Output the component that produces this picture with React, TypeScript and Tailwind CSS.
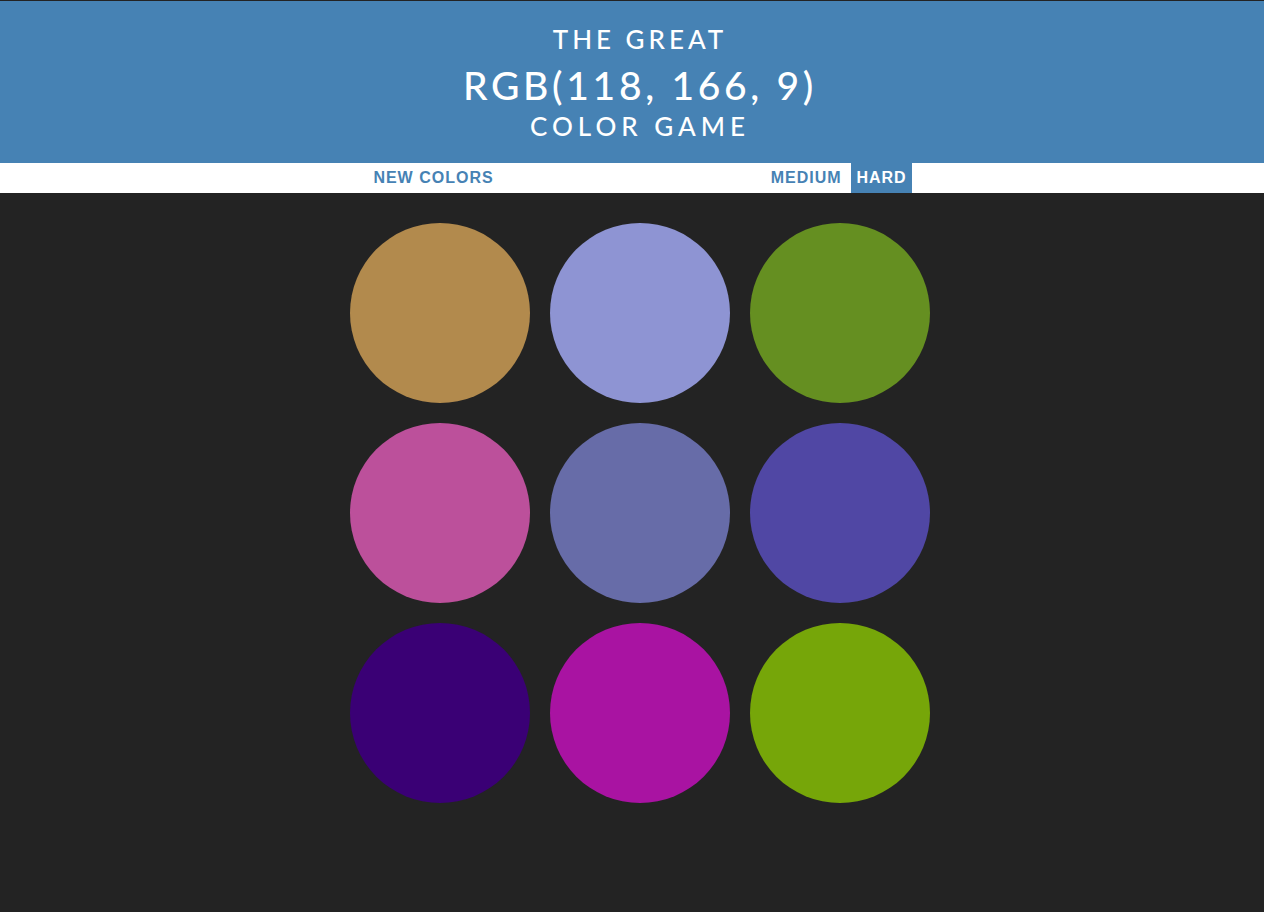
import React from "react";

const colors = [
  "#b28a4d",
  "#8e94d3",
  "#658f21",
  "#bc509b",
  "#676ca8",
  "#5047a4",
  "#3a0075",
  "#a913a2",
  "#76a609",
];

export default function App() {
  return (
    <div className="min-h-[912px] bg-[#232323]">
      <div className="h-px bg-[#232323]" />
      <header
        className="h-[162px] bg-[#4682b4] text-white pl-4 text-center uppercase font-medium"
        style={{ fontFamily: "Lato, 'Open Sans', sans-serif" }}
      >
        <div className="pt-[24px] text-[26px] leading-[28px] tracking-[4px]">The Great</div>
        <div className="mt-[11px] text-[39px] leading-[42px] tracking-[3.7px]">RGB(118, 166, 9)</div>
        <div className="mt-[6px] text-[26px] leading-[28px] tracking-[5px]">Color Game</div>
      </header>
      <nav
        className="h-[30px] bg-white pl-4"
        style={{ fontFamily: "'Liberation Sans', Arial, sans-serif" }}
      >
        <div className="mx-auto flex h-full w-[544px] items-stretch justify-between text-[16px] font-bold">
          <button className="px-[5.4px] uppercase tracking-[1px] text-[#4682b4] leading-[30px]">New Colors</button>
          <div className="flex gap-[4px]">
            <button className="px-[5.4px] uppercase tracking-[1px] text-[#4682b4] leading-[30px]">Medium</button>
            <button className="px-[5.4px] uppercase tracking-[1px] bg-[#4682b4] text-white leading-[30px]">Hard</button>
          </div>
        </div>
      </nav>
      <main className="pl-4 pt-[20px]">
        <div className="mx-auto grid w-[600px] grid-cols-3 gap-[20px] p-[10px]">
          {colors.map((c) => (
            <div
              key={c}
              className="h-[180px] w-[180px] rounded-full"
              style={{ backgroundColor: c }}
            />
          ))}
        </div>
      </main>
    </div>
  );
}
